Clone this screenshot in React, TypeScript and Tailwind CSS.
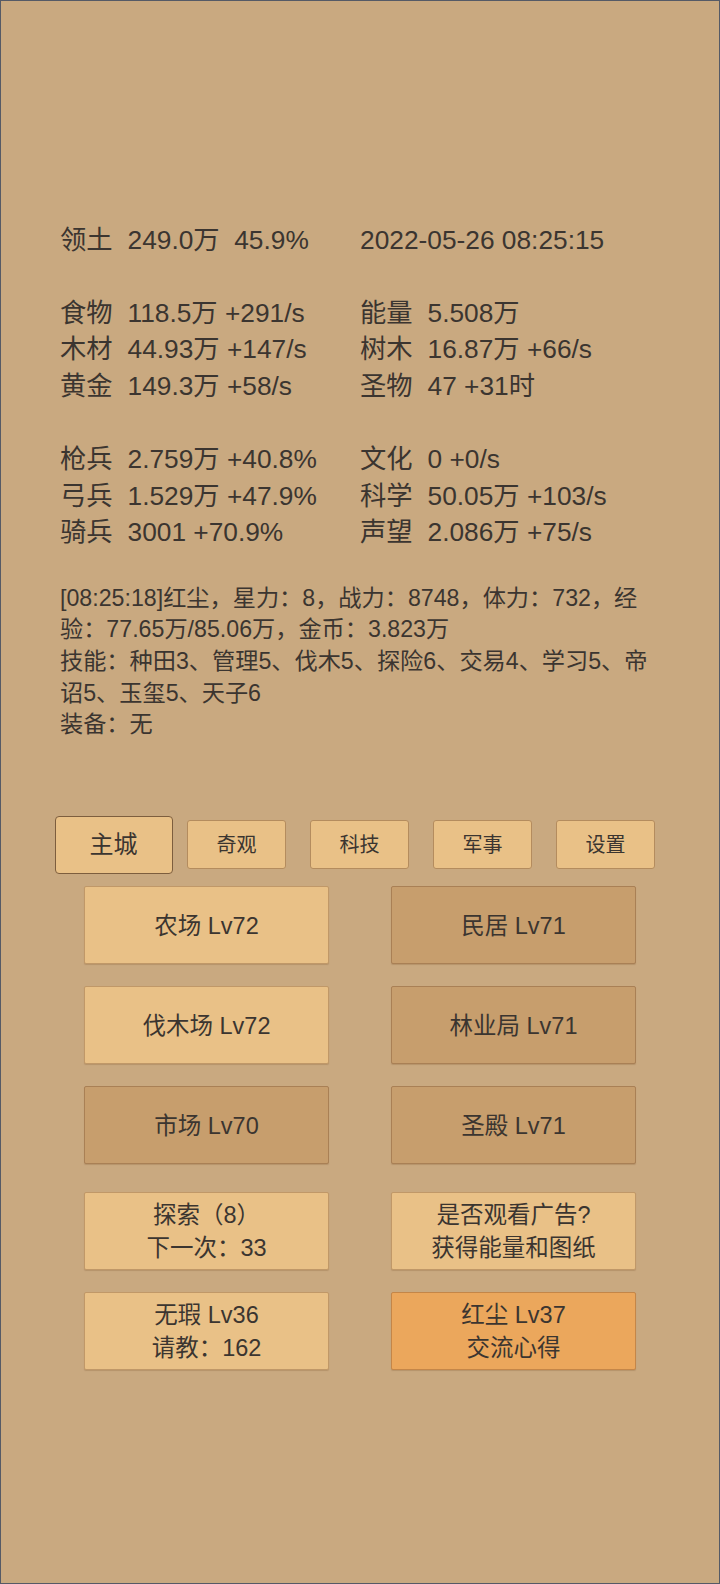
import React from "react";

const FONT = { fontFamily: "'Liberation Sans', 'Noto Sans CJK SC', sans-serif" };

type Stat = [string, string] | null;

const rows: [Stat, Stat][] = [
  [["领土", "249.0万  45.9%"], ["", "2022-05-26 08:25:15"]],
  [null, null],
  [["食物", "118.5万 +291/s"], ["能量", "5.508万"]],
  [["木材", "44.93万 +147/s"], ["树木", "16.87万 +66/s"]],
  [["黄金", "149.3万 +58/s"], ["圣物", "47 +31时"]],
  [null, null],
  [["枪兵", "2.759万 +40.8%"], ["文化", "0 +0/s"]],
  [["弓兵", "1.529万 +47.9%"], ["科学", "50.05万 +103/s"]],
  [["骑兵", "3001 +70.9%"], ["声望", "2.086万 +75/s"]],
];

function StatCell({ s }: { s: Stat }) {
  if (!s) return <div className="h-[36.6px]" />;
  return (
    <div className="h-[36.6px] flex items-center whitespace-pre">
      {s[0] ? <span className="inline-block w-[67.5px]">{s[0]}</span> : null}
      <span>{s[1]}</span>
    </div>
  );
}

const tabs = ["主城", "奇观", "科技", "军事", "设置"];

type Btn = { lines: string[]; tone: "light" | "dark" | "orange" };

const buildings: Btn[] = [
  { lines: ["农场 Lv72"], tone: "light" },
  { lines: ["民居 Lv71"], tone: "dark" },
  { lines: ["伐木场 Lv72"], tone: "light" },
  { lines: ["林业局 Lv71"], tone: "dark" },
  { lines: ["市场 Lv70"], tone: "dark" },
  { lines: ["圣殿 Lv71"], tone: "dark" },
];

const extras: Btn[] = [
  { lines: ["探索（8）", "下一次：33"], tone: "light" },
  { lines: ["是否观看广告?", "获得能量和图纸"], tone: "light" },
  { lines: ["无瑕 Lv36", "请教：162"], tone: "light" },
  { lines: ["红尘 Lv37", "交流心得"], tone: "orange" },
];

function Box({ b }: { b: Btn }) {
  const tone =
    b.tone === "light"
      ? "bg-[#e9c187] border-[#c09868]"
      : b.tone === "dark"
      ? "bg-[#c79e6d] border-[#a98055]"
      : "bg-[#eba75c] border-[#c48648]";
  return (
    <div
      className={`h-[78px] w-[245px] border rounded-[2px] pt-[3px] flex flex-col items-center justify-center text-[23.5px] leading-[33.3px] shadow-[0_1px_1px_rgba(120,85,45,0.25)] ${tone}`}
    >
      {b.lines.map((l, i) => (
        <div key={i}>{l}</div>
      ))}
    </div>
  );
}

export default function App() {
  return (
    <div
      style={FONT}
      className="w-[720px] h-[1584px] bg-[#c9a980] border border-[#555a66] box-border text-[#3b3530] flex flex-col"
    >
      <div className="pt-[221px] px-[59px] text-[26.3px]">
        {rows.map((r, i) => (
          <div key={i} className="grid grid-cols-2">
            <StatCell s={r[0]} />
            <StatCell s={r[1]} />
          </div>
        ))}
      </div>

      <div className="mt-[31.6px] px-[59px] text-[23.2px] leading-[31.55px] whitespace-nowrap">
        <div>[08:25:18]红尘，星力：8，战力：8748，体力：732，经</div>
        <div>验：77.65万/85.06万，金币：3.823万</div>
        <div>技能：种田3、管理5、伐木5、探险6、交易4、学习5、帝</div>
        <div>诏5、玉玺5、天子6</div>
        <div>装备：无</div>
      </div>

      <div className="mt-[75px] px-[51px] flex h-[58px] items-center">
        {tabs.map((t, i) => (
          <div key={t} className="w-[123px] flex justify-center">
            {i === 0 ? (
              <div className="w-[118px] h-[58px] bg-[#e9c187] border border-[#7d5e3e] rounded-[4px] flex items-center justify-center text-[24px]">
                {t}
              </div>
            ) : (
              <div className="w-[99px] h-[49px] bg-[#e9c187] border border-[#b48c5e] rounded-[3px] flex items-center justify-center text-[20px]">
                {t}
              </div>
            )}
          </div>
        ))}
      </div>

      <div className="mt-[12px] px-[83px] grid grid-cols-[245px_245px] gap-x-[62px] gap-y-[22px]">
        {buildings.map((b, i) => (
          <Box key={i} b={b} />
        ))}
      </div>

      <div className="mt-[28px] px-[83px] grid grid-cols-[245px_245px] gap-x-[62px] gap-y-[22px]">
        {extras.map((b, i) => (
          <Box key={i} b={b} />
        ))}
      </div>
    </div>
  );
}
